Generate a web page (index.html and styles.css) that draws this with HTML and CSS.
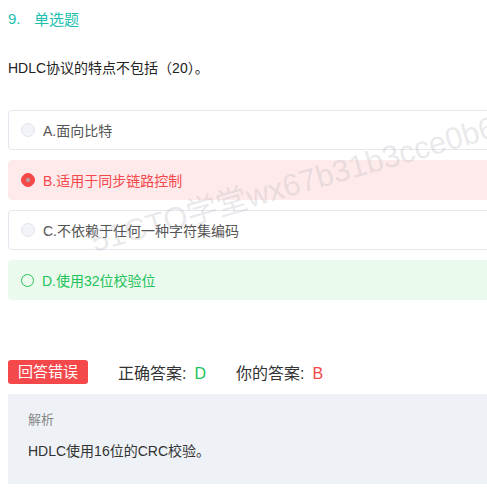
FILE: index.html
```html
<!DOCTYPE html>
<html>
<head>
<meta charset="utf-8">
<link rel="stylesheet" href="styles.css">
</head>
<body>
<div class="page">
  <div class="qhead"><span class="qnum">9.</span><span class="qtype">单选题</span></div>
  <div class="qtext">HDLC协议的特点不包括（20）。</div>
  <div class="options">
    <div class="opt"><span class="radio"></span><span class="label">A.面向比特</span></div>
    <div class="opt wrong"><span class="radio"><span class="dot"></span></span><span class="label">B.适用于同步链路控制</span></div>
    <div class="opt"><span class="radio"></span><span class="label">C.不依赖于任何一种字符集编码</span></div>
    <div class="opt right"><span class="radio"></span><span class="label">D.使用32位校验位</span></div>
  </div>
  <div class="result">
    <span class="badge">回答错误</span>
    <span class="ans">正确答案:<span class="green">D</span></span>
    <span class="ans">你的答案:<span class="red">B</span></span>
  </div>
  <div class="analysis">
    <div class="atitle">解析</div>
    <div class="atext">HDLC使用16位的CRC校验。</div>
  </div>
  <div class="watermark">51CTO学堂wx67b31b3cce0b6</div>
</div>
</body>
</html>
```

FILE: styles.css
```css
html, body {
  margin: 0;
  padding: 0;
  overflow: hidden;
  background: #fff;
}
body {
  font-family: "Liberation Sans", Arial, "Noto Sans CJK SC", sans-serif;
  width: 487px;
  height: 490px;
}
.page {
  position: relative;
  width: 620px;
  padding: 8px 0 0 8px;
}
.qhead {
  display: flex;
  height: 20px;
  align-items: center;
  font-size: 15px;
  color: #21bfb0;
}
.qnum { width: 26px; }
.qtext {
  margin-top: 30px;
  font-size: 14px;
  color: #222;
  height: 20px;
  line-height: 20px;
}
.options {
  margin-top: 32px;
  display: flex;
  flex-direction: column;
  gap: 10px;
}
.opt {
  height: 38px;
  border: 1px solid #e6e8ef;
  border-radius: 4px;
  display: flex;
  align-items: center;
  padding-left: 12px;
  font-size: 14px;
  color: #555;
}
.radio {
  width: 12px;
  height: 12px;
  border-radius: 50%;
  background: #f3f4f8;
  border: 1px solid #e2e4ec;
  margin-right: 8px;
  display: flex;
  align-items: center;
  justify-content: center;
}
.opt.wrong {
  background: #feeaeb;
  border-color: #feeaeb;
  color: #f4474a;
}
.opt.wrong .radio {
  background: #f5484b;
  border-color: #f5484b;
}
.dot {
  width: 4px;
  height: 4px;
  border-radius: 50%;
  background: #b0a8a8;
}
.opt.right {
  background: #eafaec;
  border-color: #eafaec;
  color: #22c35a;
}
.opt.right .radio {
  background: transparent;
  border: 1.5px solid #2ac25c;
  width: 11px;
  height: 11px;
}
.result {
  margin-top: 60px;
  display: flex;
  align-items: center;
  height: 24px;
  font-size: 16px;
  color: #333;
}
.badge {
  background: #f5484a;
  color: #fff;
  border-radius: 3px;
  width: 80px;
  height: 24px;
  line-height: 24px;
  text-align: center;
  font-size: 15px;
  margin-right: 30px;
}
.ans { margin-right: 30px; }
.green { color: #22c35a; margin-left: 8px; }
.red { color: #f4474a; margin-left: 8px; }
.analysis {
  margin-top: 10px;
  background: #eef1f5;
  height: 90px;
  padding: 0 20px;
  box-sizing: border-box;
}
.atitle {
  padding-top: 18px;
  font-size: 13px;
  color: #888;
  line-height: 16px;
}
.atext {
  margin-top: 14px;
  font-size: 14px;
  color: #333;
  line-height: 18px;
}
.watermark {
  position: absolute;
  left: 97px;
  top: 216px;
  font-size: 31px;
  color: rgba(170, 170, 180, 0.25);
  transform: rotate(-16deg);
  transform-origin: 0 100%;
  white-space: nowrap;
  pointer-events: none;
}
```
